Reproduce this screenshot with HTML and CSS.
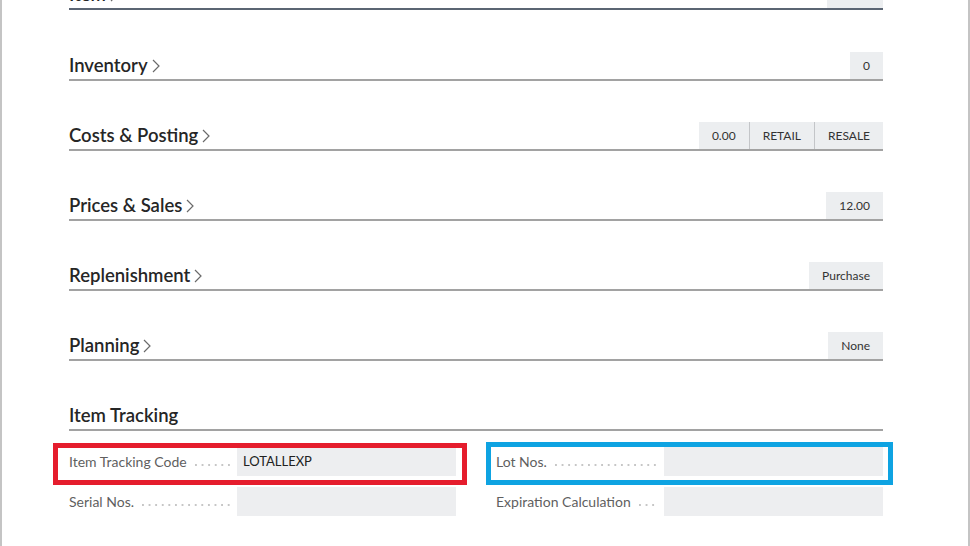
FILE: index.html
```html
<!DOCTYPE html>
<html lang="en">
<head>
<meta charset="utf-8">
<title>Item Card</title>
<link rel="stylesheet" href="styles.css">
</head>
<body>
<div class="page">
  <section class="fasttab first">
    <div class="tab-head">
      <h2 class="tab-title">Item<svg class="chev" viewBox="0 0 8 14" width="8" height="14"><polyline points="1,1 7,7 1,13"/></svg></h2>
      <div class="summary"><span class="chip chip-blank"></span></div>
    </div>
  </section>

  <section class="fasttab">
    <div class="tab-head">
      <h2 class="tab-title">Inventory<svg class="chev" viewBox="0 0 8 14" width="8" height="14"><polyline points="1,1 7,7 1,13"/></svg></h2>
      <div class="summary"><span class="chip">0</span></div>
    </div>
  </section>

  <section class="fasttab">
    <div class="tab-head">
      <h2 class="tab-title">Costs &amp; Posting<svg class="chev" viewBox="0 0 8 14" width="8" height="14"><polyline points="1,1 7,7 1,13"/></svg></h2>
      <div class="summary"><span class="chip">0.00</span><span class="chip">RETAIL</span><span class="chip">RESALE</span></div>
    </div>
  </section>

  <section class="fasttab">
    <div class="tab-head">
      <h2 class="tab-title">Prices &amp; Sales<svg class="chev" viewBox="0 0 8 14" width="8" height="14"><polyline points="1,1 7,7 1,13"/></svg></h2>
      <div class="summary"><span class="chip">12.00</span></div>
    </div>
  </section>

  <section class="fasttab">
    <div class="tab-head">
      <h2 class="tab-title">Replenishment<svg class="chev" viewBox="0 0 8 14" width="8" height="14"><polyline points="1,1 7,7 1,13"/></svg></h2>
      <div class="summary"><span class="chip">Purchase</span></div>
    </div>
  </section>

  <section class="fasttab">
    <div class="tab-head">
      <h2 class="tab-title">Planning<svg class="chev" viewBox="0 0 8 14" width="8" height="14"><polyline points="1,1 7,7 1,13"/></svg></h2>
      <div class="summary"><span class="chip">None</span></div>
    </div>
  </section>

  <section class="fasttab open">
    <div class="tab-head">
      <h2 class="tab-title">Item Tracking</h2>
    </div>
    <div class="fields">
      <div class="col">
        <div class="field hl hl-red">
          <div class="label"><span class="label-text">Item Tracking Code</span><span class="dots"></span></div>
          <div class="value">LOTALLEXP</div>
        </div>
        <div class="field">
          <div class="label"><span class="label-text">Serial Nos.</span><span class="dots"></span></div>
          <div class="value"></div>
        </div>
      </div>
      <div class="col">
        <div class="field hl hl-blue">
          <div class="label"><span class="label-text">Lot Nos.</span><span class="dots"></span></div>
          <div class="value"></div>
        </div>
        <div class="field">
          <div class="label"><span class="label-text">Expiration Calculation</span><span class="dots"></span></div>
          <div class="value"></div>
        </div>
      </div>
    </div>
  </section>
</div>
</body>
</html>
```

FILE: styles.css
```css
html, body {
  margin: 0;
  padding: 0;
  background: #ffffff;
}

body {
  height: 546px;
  overflow: hidden;
  font-family: "Lato", "Open Sans", "Liberation Sans", sans-serif;
  color: #262626;
}

.page {
  display: flow-root;
  box-sizing: border-box;
  width: 970px;
  height: 546px;
  border-left: 2px solid #c4c4c4;
  border-right: 2px solid #c4c4c4;
  padding: 0 85px 0 67px;
  overflow: hidden;
}

.fasttab {
  margin-top: 41px;
}

.fasttab.first {
  margin-top: -19px;
}

.fasttab.first + .fasttab {
  margin-top: 42px;
}

.tab-head {
  display: flex;
  align-items: center;
  justify-content: space-between;
  height: 27px;
  border-bottom: 2px solid #a2a2a2;
}

.fasttab.first .tab-head {
  border-bottom-color: #5b6573;
}

.tab-title {
  margin: 0;
  display: flex;
  align-items: center;
  font-size: 18.5px;
  font-weight: 600;
  line-height: 27px;
  color: #262626;
  white-space: nowrap;
}

.chev {
  margin-left: 4px;
  margin-top: 1px;
  fill: none;
  stroke: #6a6a6a;
  stroke-width: 1.2;
}

.summary {
  display: flex;
  align-self: stretch;
}

.chip {
  display: block;
  padding: 0 13px;
  background: #eceef0;
  font-size: 12px;
  line-height: 27px;
  color: #333333;
}

.chip + .chip {
  border-left: 1px solid #c3c5c8;
}

.chip-blank {
  width: 56px;
  padding: 0;
}

.fields {
  display: grid;
  grid-template-columns: 1fr 1fr;
  column-gap: 40px;
  margin-top: 16px;
}

.col {
  display: flex;
  flex-direction: column;
  gap: 11px;
}

.field {
  position: relative;
  display: flex;
  height: 29px;
}

.label {
  flex: 0 0 168px;
  display: flex;
  align-items: stretch;
}

.label-text {
  font-size: 14px;
  line-height: 29px;
  color: #5f5f5f;
  white-space: nowrap;
}

.dots {
  flex: 1;
  margin: 0 7px 0 8px;
  background-image: radial-gradient(circle at 1px 1px, #c6c6c6 0.8px, transparent 1.1px);
  background-size: 6.6px 2px;
  background-repeat: repeat-x;
  background-position: 0 17px;
}

.value {
  flex: 1;
  background: #edeef0;
  padding-left: 6px;
  font-size: 13px;
  line-height: 29px;
  color: #212121;
}

.hl::after {
  content: "";
  position: absolute;
  pointer-events: none;
}

.hl-red::after {
  left: -16px;
  right: -11px;
  top: -4px;
  bottom: -9px;
  border: 5px solid #e51d2d;
}

.hl-blue::after {
  left: -10px;
  right: -10px;
  top: -5px;
  bottom: -9px;
  border: 5px solid #0ea3e2;
}
```
